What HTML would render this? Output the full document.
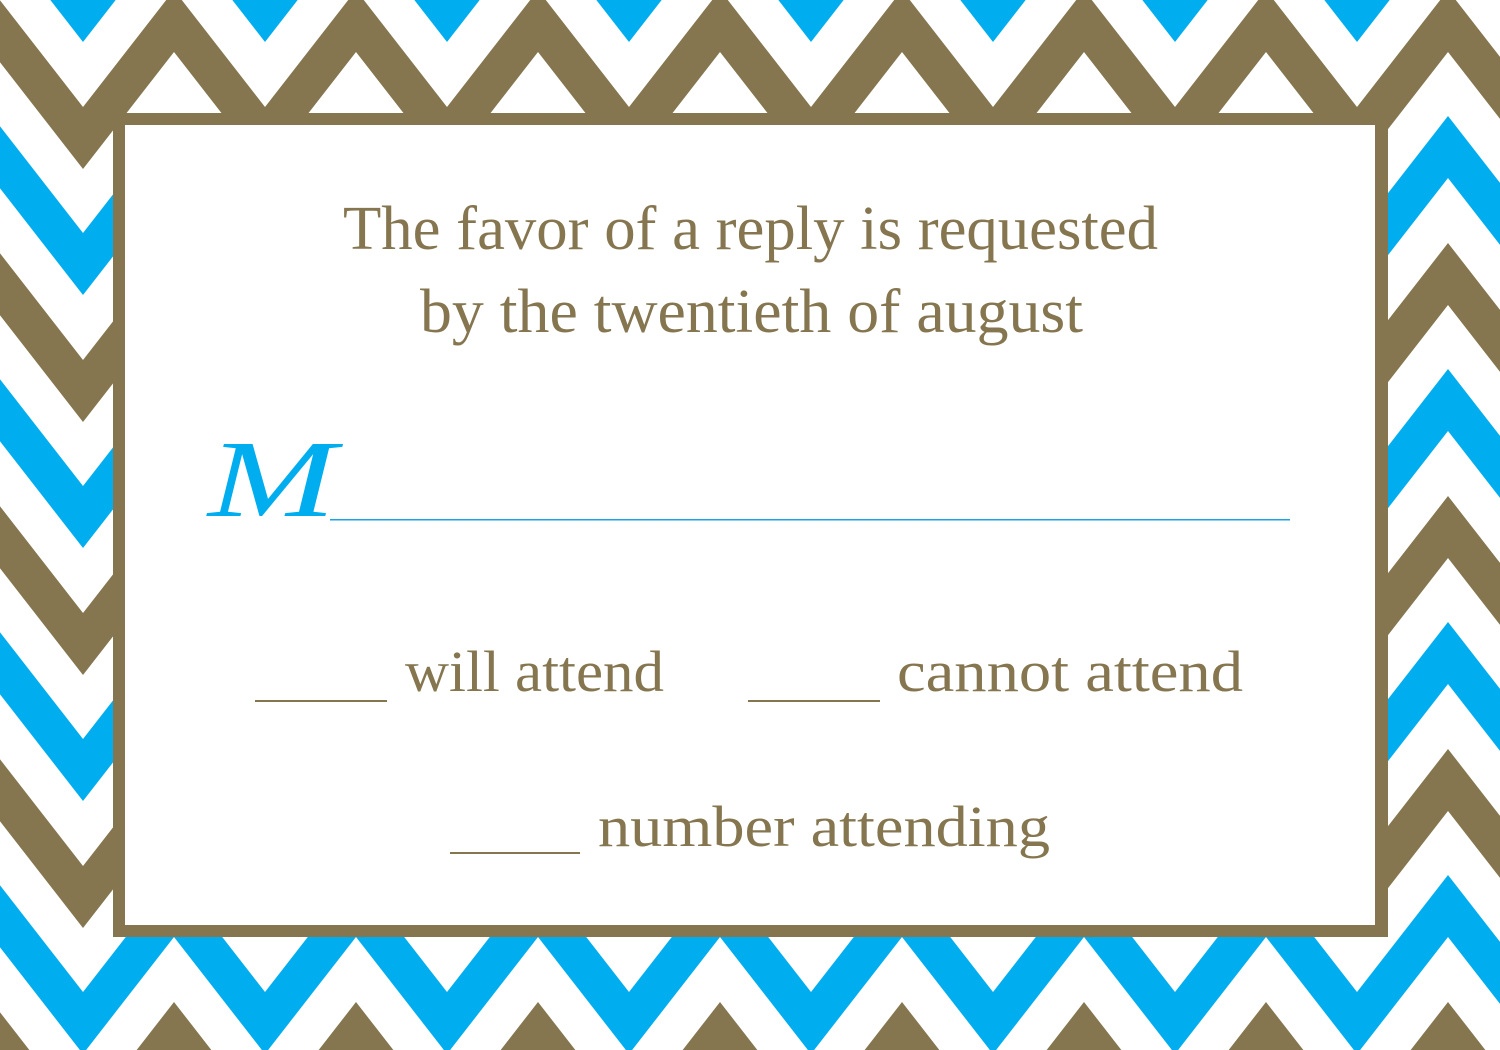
<!DOCTYPE html>
<html><head><meta charset="utf-8"><style>
html,body{margin:0;padding:0;width:1500px;height:1050px;overflow:hidden;background:#fff}
svg{display:block}
</style></head><body>
<svg width="1500" height="1050" viewBox="0 0 1500 1050" xmlns="http://www.w3.org/2000/svg">
<defs>
<pattern id="chev" patternUnits="userSpaceOnUse" x="-8" y="-10" width="182" height="253">
<rect width="182" height="253" fill="#fff"/>
<polygon fill="#857650" points="0,0 91,117 182,0 182,62 91,179 0,62"/>
<polygon fill="#857650" points="0,253 91,370 182,253 182,315 91,432 0,315"/>
<polygon fill="#00aeef" points="0,126 91,243 182,126 182,188 91,305 0,188"/>
<polygon fill="#00aeef" points="0,-127 91,-10 182,-127 182,-65 91,52 0,-65"/>
</pattern>
</defs>
<rect width="1500" height="1050" fill="url(#chev)"/>
<rect x="113" y="113" width="1275" height="824" fill="#857650"/>
<rect x="125" y="125" width="1250" height="800" fill="#fff"/>
<g fill="#857650" font-family="'Liberation Serif', serif">
<text x="343" y="249" font-size="62" textLength="815" lengthAdjust="spacingAndGlyphs">The favor of a reply is requested</text>
<text x="420" y="332" font-size="62" textLength="663" lengthAdjust="spacingAndGlyphs">by the twentieth of august</text>
<text x="405" y="691" font-size="58" textLength="259" lengthAdjust="spacingAndGlyphs">will attend</text>
<text x="897" y="691" font-size="58" textLength="346" lengthAdjust="spacingAndGlyphs">cannot attend</text>
<text x="598" y="846" font-size="58" textLength="452" lengthAdjust="spacingAndGlyphs">number attending</text>
</g>
<g fill="#857650">
<rect x="255" y="700" width="132" height="2"/>
<rect x="748" y="700" width="132" height="2"/>
<rect x="450" y="852" width="130" height="2"/>
</g>
<text x="208" y="516" fill="#00aeef" font-family="'Liberation Serif', serif" font-style="italic" font-size="110" textLength="128" lengthAdjust="spacingAndGlyphs">M</text>
<rect x="330" y="519" width="960" height="1.5" fill="#1aa3e6"/>
</svg>
</body></html>
